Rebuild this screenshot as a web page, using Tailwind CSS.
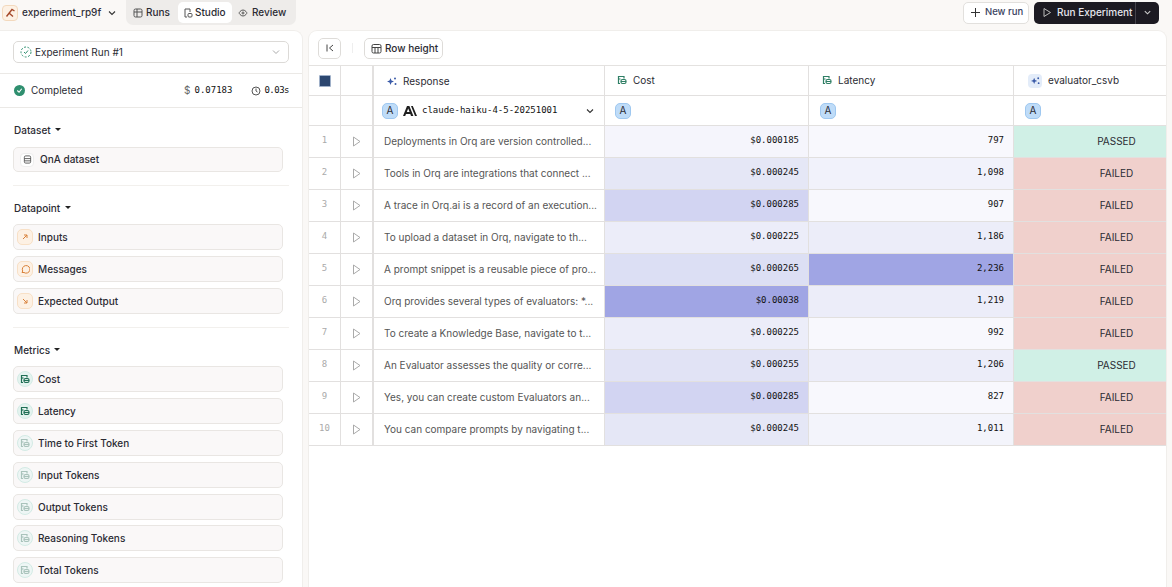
<!DOCTYPE html>
<html><head><meta charset="utf-8"><script src="https://cdn.jsdelivr.net/npm/@tailwindcss/browser@4"></script></head>
<body class="w-[1172px] h-[587px] overflow-hidden bg-[#faf8f6] font-['Inter',sans-serif] text-[#2b2b33]">
<div class="flex flex-col h-[587px]">
<header class="h-[30px] flex items-center justify-between pr-[13px] shrink-0">
  <div class="flex items-center h-[25px] mt-[-5px]">
    <div class="ml-[2px] w-[16px] h-[16px] rounded-[4px] border border-[#f3d9bd] bg-[#fdf1e4] flex items-center justify-center"><svg width="11" height="11" viewBox="0 0 11 11" fill="none" stroke="#a5482a" stroke-width="1.400"><path d="M1.500 9.500 7 2.500l2.500 1.500M4 6l4 3.500"/></svg></div>
    <span class="ml-[4px] w-[78px] text-[10px] font-medium text-[#30303a] whitespace-nowrap">experiment_rp9f</span>
    <svg class="ml-[7px]" width="10" height="10" viewBox="0 0 10 10" fill="none" stroke="#333" stroke-width="1.1"><path d="m2 3.500 3 3 3-3"/></svg>
    <div class="ml-[9px] h-[25px] w-[170px] bg-[#eeecea] rounded-b-[7px] flex items-center pl-[1px] text-[10px] font-medium">
      <div class="flex items-center gap-[3px] w-[51px] pl-[6px]"><svg width="10" height="10" viewBox="0 0 10 10" fill="none" stroke="#555" stroke-width="1"><rect x="1" y="1" width="8" height="8" rx="1.5"/><path d="M1 4h8M4 1v8"/></svg>Runs</div>
      <div class="flex items-center gap-[2px] w-[54px] h-[21px] pl-[5px] bg-white rounded-[5px]"><svg width="10" height="10" viewBox="0 0 10 10" fill="none" stroke="#555" stroke-width="1"><path d="M4 9H2V1h5v3"/><rect x="5" y="5.500" width="4" height="3.500" rx="1"/></svg>Studio</div>
      <div class="flex items-center gap-[4px] pl-[6px]"><svg width="10" height="10" viewBox="0 0 10 10" fill="none" stroke="#555" stroke-width="1"><path d="M1 5s1.500-3 4-3 4 3 4 3-1.500 3-4 3-4-3-4-3z"/><circle cx="5" cy="5" r="1"/></svg>Review</div>
    </div>
  </div>
  <div class="flex items-center gap-[5px] mt-[-5px]">
    <div class="w-[66px] h-[22px] bg-white border border-[#e2e0dd] rounded-[5px] flex items-center pl-[6px] gap-[4px] text-[9.500px] font-medium text-[#3a4260] whitespace-nowrap"><svg width="11" height="11" viewBox="0 0 11 11" fill="none" stroke="#333" stroke-width="1"><path d="M5.500 1v9M1 5.500h9"/></svg>New run</div>
    <div class="w-[125px] h-[22px] bg-[#1c1a22] rounded-[5px] flex items-center pl-[8px] text-[10px] font-medium text-[#e6e6ee] whitespace-nowrap"><svg width="10" height="11" viewBox="0 0 10 11" fill="none" stroke="#bbb" stroke-width="1"><path d="M2 1.500 8.500 5.500 2 9.500z"/></svg><span class="ml-[5px] w-[78px]">Run Experiment</span><span class="w-px h-[22px] bg-[#45434b]"></span><svg class="ml-[7px]" width="9" height="9" viewBox="0 0 10 10" fill="none" stroke="#ccc" stroke-width="1.200"><path d="m2 3.500 3 3 3-3"/></svg></div>
  </div>
</header>
<div class="flex flex-1 gap-[5px] min-h-0">
<aside class="w-[303px] bg-white rounded-tr-[9px] border-t border-r border-[#f0eeeb] shrink-0 overflow-hidden">
  <div class="h-[43px] pt-[10px] pl-[13px] pr-[13px] border-b border-[#ebe9e6]">
    <div class="h-[22px] border border-[#dcdad7] rounded-[5px] flex items-center pl-[6px] pr-[7px] text-[10px]"><svg width="12" height="12" viewBox="0 0 12 12" fill="none" stroke="#2f8f6f" stroke-width="1"><circle cx="6" cy="6" r="5" stroke-dasharray="2 1.500"/><path d="m4 6 1.500 1.500L8 4.500"/></svg><span class="ml-[3px] flex-1">Experiment Run #1</span><svg width="10" height="10" viewBox="0 0 10 10" fill="none" stroke="#aaa" stroke-width="1"><path d="m2 3.500 3 3 3-3"/></svg></div>
  </div>
  <div class="h-[34px] pl-[14px] pr-[13px] flex items-center border-b border-[#ebe9e6] text-[10px]">
    <span class="w-[11px] h-[11px] rounded-full bg-[#2f8f6f] flex items-center justify-center"><svg width="7" height="7" viewBox="0 0 8 8" fill="none" stroke="#fff" stroke-width="1.300"><path d="m1.500 4 2 2 3-4"/></svg></span>
    <span class="ml-[6px] flex-1">Completed</span>
    <span class="text-[10px] text-[#666]">$</span><span class="ml-[4px] font-['DejaVu_Sans_Mono',monospace] text-[9px] text-[#111]">0.07183</span>
    <svg class="ml-[19px]" width="10" height="10" viewBox="0 0 10 10" fill="none" stroke="#555" stroke-width="1"><circle cx="5" cy="5" r="4"/><path d="M5 2.500V5l1.500 1"/></svg><span class="ml-[3px] font-['DejaVu_Sans_Mono',monospace] text-[9px] tracking-[-0.5px] text-[#111]">0.03s</span>
  </div>
  <div class="pl-[13px] pr-[13px] font-medium">
    <div class="h-[39px] pl-[1px] pt-[15px] flex items-start text-[10px] gap-[4px]">Dataset <span class="mt-[5px] w-0 h-0 border-x-[3.500px] border-x-transparent border-t-[3px] border-t-[#222]"></span></div>
    <div class="mr-[6px] h-[25px] bg-[#faf8f8] border border-[#e9e6e3] rounded-[5px] flex items-center pl-[6px] text-[10px]"><span class="w-[14px] h-[14px] rounded-[4px] bg-white border border-[#eee] flex items-center justify-center"><svg width="9" height="9" viewBox="0 0 10 10" fill="none" stroke="#555" stroke-width="1"><rect x="1.500" y="1" width="7" height="8" rx="1.500"/><path d="M1.500 4h7M1.500 6.500h7"/></svg></span><span class="ml-[6px]">QnA dataset</span></div>
    <div class="mt-[13px] border-t border-[#f2f0ed]"></div>
    <div class="h-[38px] pl-[1px] pt-[15px] flex items-start text-[10px] gap-[5px]">Datapoint <span class="mt-[5px] w-0 h-0 border-x-[3.500px] border-x-transparent border-t-[3px] border-t-[#222]"></span></div>
    <div class="mr-[6px] flex flex-col gap-[6px]">
      <div class="h-[26px] bg-[#faf8f8] border border-[#e9e6e3] rounded-[5px] flex items-center pl-[3px] text-[10px]"><span class="w-[16px] h-[16px] rounded-[5px] bg-[#fdf1e4] border border-[#f8e0c6] flex items-center justify-center"><svg width="8" height="8" viewBox="0 0 8 8" fill="none" stroke="#d9813a" stroke-width="1"><path d="M2 6 6 2M3 2h3v3"/></svg></span><span class="ml-[5px]">Inputs</span></div>
      <div class="h-[26px] bg-[#faf8f8] border border-[#e9e6e3] rounded-[5px] flex items-center pl-[3px] text-[10px]"><span class="w-[16px] h-[16px] rounded-[5px] bg-[#fdf1e4] border border-[#f8e0c6] flex items-center justify-center"><svg width="10" height="10" viewBox="0 0 10 10" fill="none" stroke="#d9813a" stroke-width="1"><path d="M2 8.500 2.700 7A3.800 3.800 0 1 1 4 8.500z"/></svg></span><span class="ml-[5px]">Messages</span></div>
      <div class="h-[26px] bg-[#faf8f8] border border-[#e9e6e3] rounded-[5px] flex items-center pl-[3px] text-[10px]"><span class="w-[16px] h-[16px] rounded-[5px] bg-[#fdf1e4] border border-[#f8e0c6] flex items-center justify-center"><svg width="8" height="8" viewBox="0 0 8 8" fill="none" stroke="#d9813a" stroke-width="1"><path d="M2 2 6 6M6 3v3H3"/></svg></span><span class="ml-[5px]">Expected Output</span></div>
    </div>
    <div class="mt-[13px] border-t border-[#f2f0ed]"></div>
    <div class="h-[38px] pl-[1px] pt-[15px] flex items-start text-[10px] gap-[4px]">Metrics <span class="mt-[5px] w-0 h-0 border-x-[3.500px] border-x-transparent border-t-[3px] border-t-[#222]"></span></div>
    <div class="mr-[6px] flex flex-col gap-[6px]">
      <div class="h-[26px] bg-[#faf8f8] border border-[#e9e6e3] rounded-[5px] flex items-center pl-[3px] text-[10px]"><span class="w-[16px] h-[16px] rounded-full bg-[#e4f3ef] border border-[#d3ebe5] flex items-center justify-center"><svg width="10" height="10" viewBox="0 0 10 10" fill="none" stroke="#1f6f55" stroke-width="1.200"><path d="M3 8.500H1.500V1.500h5.500v2"/><path d="M3.500 4H1.500"/><rect x="4" y="4.500" width="5" height="4" rx="1.500"/><path d="M4 6.500h5"/></svg></span><span class="ml-[5px]">Cost</span></div>
      <div class="h-[26px] bg-[#faf8f8] border border-[#e9e6e3] rounded-[5px] flex items-center pl-[3px] text-[10px]"><span class="w-[16px] h-[16px] rounded-full bg-[#e4f3ef] border border-[#d3ebe5] flex items-center justify-center"><svg width="10" height="10" viewBox="0 0 10 10" fill="none" stroke="#1f6f55" stroke-width="1.200"><path d="M3 8.500H1.500V1.500h5.500v2"/><path d="M3.500 4H1.500"/><rect x="4" y="4.500" width="5" height="4" rx="1.500"/><path d="M4 6.500h5"/></svg></span><span class="ml-[5px]">Latency</span></div>
      <div class="h-[26px] bg-[#faf8f8] border border-[#e9e6e3] rounded-[5px] flex items-center pl-[3px] text-[10px]"><span class="w-[16px] h-[16px] rounded-full bg-[#eef6f5] border border-[#d3ebe5] flex items-center justify-center"><svg width="10" height="10" viewBox="0 0 10 10" fill="none" stroke="#a9c3bb" stroke-width="1.200"><path d="M3 8.500H1.500V1.500h5.500v2"/><path d="M3.500 4H1.500"/><rect x="4" y="4.500" width="5" height="4" rx="1.500"/><path d="M4 6.500h5"/></svg></span><span class="ml-[5px]">Time to First Token</span></div>
      <div class="h-[26px] bg-[#faf8f8] border border-[#e9e6e3] rounded-[5px] flex items-center pl-[3px] text-[10px]"><span class="w-[16px] h-[16px] rounded-full bg-[#eef6f5] border border-[#d3ebe5] flex items-center justify-center"><svg width="10" height="10" viewBox="0 0 10 10" fill="none" stroke="#a9c3bb" stroke-width="1.200"><path d="M3 8.500H1.500V1.500h5.500v2"/><path d="M3.500 4H1.500"/><rect x="4" y="4.500" width="5" height="4" rx="1.500"/><path d="M4 6.500h5"/></svg></span><span class="ml-[5px]">Input Tokens</span></div>
      <div class="h-[26px] bg-[#faf8f8] border border-[#e9e6e3] rounded-[5px] flex items-center pl-[3px] text-[10px]"><span class="w-[16px] h-[16px] rounded-full bg-[#eef6f5] border border-[#d3ebe5] flex items-center justify-center"><svg width="10" height="10" viewBox="0 0 10 10" fill="none" stroke="#a9c3bb" stroke-width="1.200"><path d="M3 8.500H1.500V1.500h5.500v2"/><path d="M3.500 4H1.500"/><rect x="4" y="4.500" width="5" height="4" rx="1.500"/><path d="M4 6.500h5"/></svg></span><span class="ml-[5px]">Output Tokens</span></div>
      <div class="h-[26px] mt-[-1px] bg-[#faf8f8] border border-[#e9e6e3] rounded-[5px] flex items-center pl-[3px] text-[10px]"><span class="w-[16px] h-[16px] rounded-full bg-[#eef6f5] border border-[#d3ebe5] flex items-center justify-center"><svg width="10" height="10" viewBox="0 0 10 10" fill="none" stroke="#a9c3bb" stroke-width="1.200"><path d="M3 8.500H1.500V1.500h5.500v2"/><path d="M3.500 4H1.500"/><rect x="4" y="4.500" width="5" height="4" rx="1.500"/><path d="M4 6.500h5"/></svg></span><span class="ml-[5px]">Reasoning Tokens</span></div>
      <div class="h-[26px] bg-[#faf8f8] border border-[#e9e6e3] rounded-[5px] flex items-center pl-[3px] text-[10px]"><span class="w-[16px] h-[16px] rounded-full bg-[#eef6f5] border border-[#d3ebe5] flex items-center justify-center"><svg width="10" height="10" viewBox="0 0 10 10" fill="none" stroke="#a9c3bb" stroke-width="1.200"><path d="M3 8.500H1.500V1.500h5.500v2"/><path d="M3.500 4H1.500"/><rect x="4" y="4.500" width="5" height="4" rx="1.500"/><path d="M4 6.500h5"/></svg></span><span class="ml-[5px]">Total Tokens</span></div>
    </div>
  </div>
</aside>
<main class="w-[859px] bg-white border-t border-l border-r border-[#f0eeeb] rounded-t-[9px] overflow-hidden">
  <div class="h-[35px] flex items-center pl-[9px] border-b border-[#e4e2e0]">
    <div class="w-[23px] h-[21px] border border-[#dedcd9] rounded-[5px] flex items-center justify-center"><svg width="10" height="10" viewBox="0 0 10 10" fill="none" stroke="#444" stroke-width="1"><path d="M2 1.500v7M8 2 4.500 5 8 8"/></svg></div>
    <span class="ml-[11px] mr-[11px] w-px h-[10px] bg-[#eee]"></span>
    <div class="w-[79px] h-[21px] border border-[#dedcd9] rounded-[5px] flex items-center pl-[6px] gap-[3px] text-[10px] font-medium whitespace-nowrap"><svg width="11" height="11" viewBox="0 0 11 11" fill="none" stroke="#444" stroke-width="1"><rect x="1" y="1.500" width="9" height="8.500" rx="1.500"/><path d="M1 4.500h9M4 4.500V10M7 4.500V10"/></svg>Row height</div>
  </div>
  <div class="grid grid-cols-[32px_33px_231px_204px_205px_153px] grid-rows-[30px_30px_repeat(10,32px)] text-[10px] [&>*]:border-b [&>*]:border-[#e2e0df] [&>*]:border-r">
    <div class="flex items-center justify-center"><span class="w-[12px] h-[12px] bg-[#2c4770] border border-[#9fb0c9] rounded-[1px]"></span></div>
    <div class="!border-r-2"></div>
    <div class="flex items-center pl-[13px] gap-[6px] pt-[1px]"><svg width="10" height="10" viewBox="0 0 10 10" fill="#3a5aa8"><path d="M3.500 2 4.500 4.500 7 5.500 4.500 6.500 3.500 9 2.500 6.500 0 5.500 2.500 4.500z"/><circle cx="8" cy="2.500" r="1"/><circle cx="8.500" cy="8" r="1"/></svg>Response</div>
    <div class="flex items-start pt-[7px] pl-[12px] gap-[6px]"><svg class="mt-[2px]" width="10" height="10" viewBox="0 0 10 10" fill="none" stroke="#2f7f65" stroke-width="1.200"><path d="M3 8.500H1.500V1.500h5.500v2"/><path d="M3.500 4H1.500"/><rect x="4" y="4.500" width="5" height="4" rx="1.500"/><path d="M4 6.500h5"/></svg>Cost</div>
    <div class="flex items-start pt-[7px] pl-[13px] gap-[6px]"><svg class="mt-[2px]" width="10" height="10" viewBox="0 0 10 10" fill="none" stroke="#2f7f65" stroke-width="1.200"><path d="M3 8.500H1.500V1.500h5.500v2"/><path d="M3.500 4H1.500"/><rect x="4" y="4.500" width="5" height="4" rx="1.500"/><path d="M4 6.500h5"/></svg>Latency</div>
    <div class="flex items-center pl-[14px] gap-[6px]"><span class="w-[14px] h-[14px] rounded-[4px] bg-[#e3ecf9] flex items-center justify-center"><svg width="9" height="9" viewBox="0 0 10 10" fill="#3a5aa8"><path d="M3.500 2 4.500 4.500 7 5.500 4.500 6.500 3.500 9 2.500 6.500 0 5.500 2.500 4.500z"/><circle cx="8" cy="2.500" r="1"/><circle cx="8.500" cy="8" r="1"/></svg></span>evaluator_csvb</div>

    <div></div>
    <div class="!border-r-2"></div>
    <div class="flex items-center pl-[8px] pr-[9px]"><span class="w-[16px] h-[16px] rounded-[5px] bg-[#bfdcf8] border border-[#9fc8f0] flex items-center justify-center text-[10px]">A</span><svg class="ml-[5px]" width="14" height="10" viewBox="0 0 14 10" fill="#1f1f1f"><path d="M0 10 4 0h2.400l4 10H8L7.300 8H3l-.8 2zM3.800 6h2.800L5.200 2.500zM8 0h1.800L14 10h-2z"/></svg><span class="ml-[5px] flex-1 font-['DejaVu_Sans_Mono',monospace] text-[9px] text-[#111]">claude-haiku-4-5-20251001</span><svg width="10" height="10" viewBox="0 0 10 10" fill="none" stroke="#333" stroke-width="1.100"><path d="m2 3.500 3 3 3-3"/></svg></div>
    <div class="flex items-center pl-[10px]"><span class="w-[16px] h-[16px] rounded-[5px] bg-[#bfdcf8] border border-[#9fc8f0] flex items-center justify-center text-[10px]">A</span></div>
    <div class="flex items-center pl-[11px]"><span class="w-[16px] h-[16px] rounded-[5px] bg-[#bfdcf8] border border-[#9fc8f0] flex items-center justify-center text-[10px]">A</span></div>
    <div class="flex items-center pl-[11px]"><span class="w-[16px] h-[16px] rounded-[5px] bg-[#bfdcf8] border border-[#9fc8f0] flex items-center justify-center text-[10px]">A</span></div>

    <div class="flex items-center justify-center pb-[1px] font-['DejaVu_Sans_Mono',monospace] text-[9px] text-[#aaa]">1</div>
    <div class="!border-r-2 flex items-center justify-center pb-[1px]"><svg width="9" height="11" viewBox="0 0 9 11" fill="none" stroke="#aaa"><path d="M1.500 1 8 5.500 1.500 10z"/></svg></div>
    <div class="flex items-center pl-[10px] pb-[1px] text-[#555] whitespace-nowrap overflow-hidden">Deployments in Orq are version controlled...</div>
    <div class="bg-[#f5f5fc] flex items-center justify-end pr-[9px] pb-[1px] font-['DejaVu_Sans_Mono',monospace] text-[9px] text-[#111]">$0.000185</div>
    <div class="bg-[#f8f8fd] flex items-center justify-end pr-[9px] pb-[1px] font-['DejaVu_Sans_Mono',monospace] text-[9px] text-[#111]">797</div>
    <div class="bg-[#d0f0e6] flex items-center justify-center pl-[53px] pb-[1px]">PASSED</div>

    <div class="flex items-center justify-center pb-[1px] font-['DejaVu_Sans_Mono',monospace] text-[9px] text-[#aaa]">2</div>
    <div class="!border-r-2 flex items-center justify-center pb-[1px]"><svg width="9" height="11" viewBox="0 0 9 11" fill="none" stroke="#aaa"><path d="M1.500 1 8 5.500 1.500 10z"/></svg></div>
    <div class="flex items-center pl-[10px] pb-[1px] text-[#555] whitespace-nowrap overflow-hidden">Tools in Orq are integrations that connect ...</div>
    <div class="bg-[#e5e7f6] flex items-center justify-end pr-[9px] pb-[1px] font-['DejaVu_Sans_Mono',monospace] text-[9px] text-[#111]">$0.000245</div>
    <div class="bg-[#f1f2fb] flex items-center justify-end pr-[9px] pb-[1px] font-['DejaVu_Sans_Mono',monospace] text-[9px] text-[#111]">1,098</div>
    <div class="bg-[#f0d0cc] flex items-center justify-center pl-[53px] pb-[1px]">FAILED</div>

    <div class="flex items-center justify-center pb-[1px] font-['DejaVu_Sans_Mono',monospace] text-[9px] text-[#aaa]">3</div>
    <div class="!border-r-2 flex items-center justify-center pb-[1px]"><svg width="9" height="11" viewBox="0 0 9 11" fill="none" stroke="#aaa"><path d="M1.500 1 8 5.500 1.500 10z"/></svg></div>
    <div class="flex items-center pl-[10px] pb-[1px] text-[#555] whitespace-nowrap overflow-hidden">A trace in Orq.ai is a record of an execution...</div>
    <div class="bg-[#d2d4f2] flex items-center justify-end pr-[9px] pb-[1px] font-['DejaVu_Sans_Mono',monospace] text-[9px] text-[#111]">$0.000285</div>
    <div class="bg-[#f8f8fd] flex items-center justify-end pr-[9px] pb-[1px] font-['DejaVu_Sans_Mono',monospace] text-[9px] text-[#111]">907</div>
    <div class="bg-[#f0d0cc] flex items-center justify-center pl-[53px] pb-[1px]">FAILED</div>

    <div class="flex items-center justify-center pb-[1px] font-['DejaVu_Sans_Mono',monospace] text-[9px] text-[#aaa]">4</div>
    <div class="!border-r-2 flex items-center justify-center pb-[1px]"><svg width="9" height="11" viewBox="0 0 9 11" fill="none" stroke="#aaa"><path d="M1.500 1 8 5.500 1.500 10z"/></svg></div>
    <div class="flex items-center pl-[10px] pb-[1px] text-[#555] whitespace-nowrap overflow-hidden">To upload a dataset in Orq, navigate to th...</div>
    <div class="bg-[#ecedf9] flex items-center justify-end pr-[9px] pb-[1px] font-['DejaVu_Sans_Mono',monospace] text-[9px] text-[#111]">$0.000225</div>
    <div class="bg-[#ecedf9] flex items-center justify-end pr-[9px] pb-[1px] font-['DejaVu_Sans_Mono',monospace] text-[9px] text-[#111]">1,186</div>
    <div class="bg-[#f0d0cc] flex items-center justify-center pl-[53px] pb-[1px]">FAILED</div>

    <div class="flex items-center justify-center pb-[1px] font-['DejaVu_Sans_Mono',monospace] text-[9px] text-[#aaa]">5</div>
    <div class="!border-r-2 flex items-center justify-center pb-[1px]"><svg width="9" height="11" viewBox="0 0 9 11" fill="none" stroke="#aaa"><path d="M1.500 1 8 5.500 1.500 10z"/></svg></div>
    <div class="flex items-center pl-[10px] pb-[1px] text-[#555] whitespace-nowrap overflow-hidden">A prompt snippet is a reusable piece of pro...</div>
    <div class="bg-[#dcdff4] flex items-center justify-end pr-[9px] pb-[1px] font-['DejaVu_Sans_Mono',monospace] text-[9px] text-[#111]">$0.000265</div>
    <div class="bg-[#a0a5e4] flex items-center justify-end pr-[9px] pb-[1px] font-['DejaVu_Sans_Mono',monospace] text-[9px] text-[#111]">2,236</div>
    <div class="bg-[#f0d0cc] flex items-center justify-center pl-[53px] pb-[1px]">FAILED</div>

    <div class="flex items-center justify-center pb-[1px] font-['DejaVu_Sans_Mono',monospace] text-[9px] text-[#aaa]">6</div>
    <div class="!border-r-2 flex items-center justify-center pb-[1px]"><svg width="9" height="11" viewBox="0 0 9 11" fill="none" stroke="#aaa"><path d="M1.500 1 8 5.500 1.500 10z"/></svg></div>
    <div class="flex items-center pl-[10px] pb-[1px] text-[#555] whitespace-nowrap overflow-hidden">Orq provides several types of evaluators: *...</div>
    <div class="bg-[#a0a5e4] flex items-center justify-end pr-[9px] pb-[1px] font-['DejaVu_Sans_Mono',monospace] text-[9px] text-[#111]">$0.00038</div>
    <div class="bg-[#ecedf9] flex items-center justify-end pr-[9px] pb-[1px] font-['DejaVu_Sans_Mono',monospace] text-[9px] text-[#111]">1,219</div>
    <div class="bg-[#f0d0cc] flex items-center justify-center pl-[53px] pb-[1px]">FAILED</div>

    <div class="flex items-center justify-center pb-[1px] font-['DejaVu_Sans_Mono',monospace] text-[9px] text-[#aaa]">7</div>
    <div class="!border-r-2 flex items-center justify-center pb-[1px]"><svg width="9" height="11" viewBox="0 0 9 11" fill="none" stroke="#aaa"><path d="M1.500 1 8 5.500 1.500 10z"/></svg></div>
    <div class="flex items-center pl-[10px] pb-[1px] text-[#555] whitespace-nowrap overflow-hidden">To create a Knowledge Base, navigate to t...</div>
    <div class="bg-[#ecedf9] flex items-center justify-end pr-[9px] pb-[1px] font-['DejaVu_Sans_Mono',monospace] text-[9px] text-[#111]">$0.000225</div>
    <div class="bg-[#f8f8fd] flex items-center justify-end pr-[9px] pb-[1px] font-['DejaVu_Sans_Mono',monospace] text-[9px] text-[#111]">992</div>
    <div class="bg-[#f0d0cc] flex items-center justify-center pl-[53px] pb-[1px]">FAILED</div>

    <div class="flex items-center justify-center pb-[1px] font-['DejaVu_Sans_Mono',monospace] text-[9px] text-[#aaa]">8</div>
    <div class="!border-r-2 flex items-center justify-center pb-[1px]"><svg width="9" height="11" viewBox="0 0 9 11" fill="none" stroke="#aaa"><path d="M1.500 1 8 5.500 1.500 10z"/></svg></div>
    <div class="flex items-center pl-[10px] pb-[1px] text-[#555] whitespace-nowrap overflow-hidden">An Evaluator assesses the quality or corre...</div>
    <div class="bg-[#e1e3f5] flex items-center justify-end pr-[9px] pb-[1px] font-['DejaVu_Sans_Mono',monospace] text-[9px] text-[#111]">$0.000255</div>
    <div class="bg-[#ecedf9] flex items-center justify-end pr-[9px] pb-[1px] font-['DejaVu_Sans_Mono',monospace] text-[9px] text-[#111]">1,206</div>
    <div class="bg-[#d0f0e6] flex items-center justify-center pl-[53px] pb-[1px]">PASSED</div>

    <div class="flex items-center justify-center pb-[1px] font-['DejaVu_Sans_Mono',monospace] text-[9px] text-[#aaa]">9</div>
    <div class="!border-r-2 flex items-center justify-center pb-[1px]"><svg width="9" height="11" viewBox="0 0 9 11" fill="none" stroke="#aaa"><path d="M1.500 1 8 5.500 1.500 10z"/></svg></div>
    <div class="flex items-center pl-[10px] pb-[1px] text-[#555] whitespace-nowrap overflow-hidden">Yes, you can create custom Evaluators an...</div>
    <div class="bg-[#d2d4f2] flex items-center justify-end pr-[9px] pb-[1px] font-['DejaVu_Sans_Mono',monospace] text-[9px] text-[#111]">$0.000285</div>
    <div class="bg-[#f8f8fd] flex items-center justify-end pr-[9px] pb-[1px] font-['DejaVu_Sans_Mono',monospace] text-[9px] text-[#111]">827</div>
    <div class="bg-[#f0d0cc] flex items-center justify-center pl-[53px] pb-[1px]">FAILED</div>

    <div class="flex items-center justify-center pb-[1px] font-['DejaVu_Sans_Mono',monospace] text-[9px] text-[#aaa]">10</div>
    <div class="!border-r-2 flex items-center justify-center pb-[1px]"><svg width="9" height="11" viewBox="0 0 9 11" fill="none" stroke="#aaa"><path d="M1.500 1 8 5.500 1.500 10z"/></svg></div>
    <div class="flex items-center pl-[10px] pb-[1px] text-[#555] whitespace-nowrap overflow-hidden">You can compare prompts by navigating t...</div>
    <div class="bg-[#e5e7f6] flex items-center justify-end pr-[9px] pb-[1px] font-['DejaVu_Sans_Mono',monospace] text-[9px] text-[#111]">$0.000245</div>
    <div class="bg-[#f3f4fb] flex items-center justify-end pr-[9px] pb-[1px] font-['DejaVu_Sans_Mono',monospace] text-[9px] text-[#111]">1,011</div>
    <div class="bg-[#f0d0cc] flex items-center justify-center pl-[53px] pb-[1px]">FAILED</div>
  </div>
</main>
</div>
</div>
</body></html>
